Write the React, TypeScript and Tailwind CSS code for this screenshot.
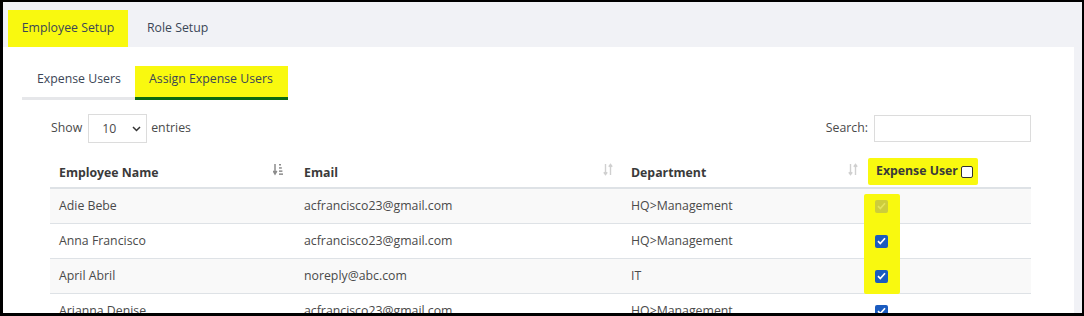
import React from 'react'

const rows = [
    { name: 'Adie Bebe', email: 'acfrancisco23@gmail.com', dept: 'HQ>Management', state: 'disabled' },
    { name: 'Anna Francisco', email: 'acfrancisco23@gmail.com', dept: 'HQ>Management', state: 'on' },
    { name: 'April Abril', email: 'noreply@abc.com', dept: 'IT', state: 'on' },
    { name: 'Arianna Denise', email: 'acfrancisco23@gmail.com', dept: 'HQ>Management', state: 'on' }
]

function SortActive() {
    return (
        <svg width="10" height="13" viewBox="0 0 10 13" className="text-[#8c8c8c]">
            <path d="M2 1v10M0.2 8l1.8 3 1.8-3" stroke="currentColor" strokeWidth="1.5" fill="none" />
            <rect x="6" y="1" width="2" height="1.5" fill="currentColor" />
            <rect x="6" y="4.2" width="2.8" height="1.5" fill="currentColor" />
            <rect x="6" y="7.4" width="3.4" height="1.5" fill="currentColor" />
            <rect x="6" y="10.4" width="4" height="1.5" fill="currentColor" />
        </svg>
    )
}

function SortBoth() {
    return (
        <svg width="10" height="13" viewBox="0 0 10 13" className="text-[#d0d0d0]">
            <path d="M2.5 1v10.5M0.8 9.3l1.7 2.2 1.7-2.2" stroke="currentColor" strokeWidth="1.4" fill="none" />
            <path d="M7.5 12V1.5M5.8 3.7l1.7-2.2 1.7 2.2" stroke="currentColor" strokeWidth="1.4" fill="none" />
        </svg>
    )
}

function Check({ state }: { state: string }) {
    const disabled = state === 'disabled'
    return (
        <div
            className={
                'relative z-10 flex h-[13px] w-[13px] items-center justify-center rounded-[2px] ' +
                (disabled ? 'bg-[#cdcd3c]' : 'bg-[#1a5bbf]')
            }
        >
            <svg width="9" height="8" viewBox="0 0 9 8">
                <path
                    d="M1 4.2l2.3 2.3L8 1.3"
                    stroke={disabled ? '#e4e45a' : '#ffffff'}
                    strokeWidth="1.7"
                    fill="none"
                />
            </svg>
        </div>
    )
}

export default function App() {
    return (
        <div
            className="h-[316px] w-[1084px] overflow-hidden border-t-2 border-r-2 border-b-[3px] border-l-[3px] border-black bg-[#f1f2f6] text-[12.3px]"
            style={{ fontFamily: '"Open Sans", "Noto Sans", sans-serif' }}
        >
            <div className="flex pt-[8px] pl-[5px] text-[#3b4656]">
                <div className="flex h-[37px] w-[120px] items-center justify-center bg-[#f9f90f]">
                    Employee Setup
                </div>
                <div className="flex h-[37px] items-center px-[19px]">Role Setup</div>
            </div>

            <div className="mr-[8px] h-[300px] bg-white pt-[19px]">
                <div className="flex pl-[19px] text-[#3b4656]">
                    <div className="h-[34px] w-[113px] border-b-[3px] border-[#e6e7ea] pt-[4px] pl-[15px]">
                        Expense Users
                    </div>
                    <div className="h-[34px] w-[153px] border-b-[3px] border-[#0c6a10] bg-[#f9f90f] pt-[4px] pl-[14px]">
                        Assign Expense Users
                    </div>
                </div>

                <div className="mr-[43px] ml-[47px]">
                    <div className="mt-[14px] flex items-center justify-between text-[#4a4a4a]">
                        <div className="flex items-center">
                            <span className="pl-[1px]">Show</span>
                            <div className="ml-[6px] flex h-[29px] w-[59px] items-center justify-between border border-[#dcdcdc] pr-[5px] pl-[13px]">
                                <span className="pt-[2px]">10</span>
                                <svg width="9" height="6" viewBox="0 0 9 6">
                                    <path d="M1 1l3.5 3.5L8 1" stroke="#333" strokeWidth="1.5" fill="none" />
                                </svg>
                            </div>
                            <span className="ml-[4px]">entries</span>
                        </div>
                        <div className="flex items-center">
                            <span>Search:</span>
                            <div className="ml-[6px] h-[27px] w-[157px] border border-[#dcdcdc]" />
                        </div>
                    </div>

                    <div className="relative mt-[8px]">
                        <div className="grid h-[38px] grid-cols-[245px_327px_244px_165px] border-b-2 border-[#dee2e6] font-bold text-[#3a3a3a]">
                            <div className="flex items-end justify-between pr-[12px] pb-[5px] pl-[9px]">
                                <span>Employee Name</span>
                                <span className="pb-[6px]"><SortActive /></span>
                            </div>
                            <div className="flex items-end justify-between pr-[9px] pb-[5px] pl-[9px]">
                                <span>Email</span>
                                <span className="pb-[6px]"><SortBoth /></span>
                            </div>
                            <div className="flex items-end justify-between pr-[8px] pb-[5px] pl-[9px]">
                                <span>Department</span>
                                <span className="pb-[6px]"><SortBoth /></span>
                            </div>
                            <div className="flex items-end pb-[2px] pl-[2px]">
                                <div className="flex h-[27px] items-center gap-[3px] rounded-[2px] bg-[#f9f90f] pr-[5px] pl-[8px] text-[#3a3a3a]">
                                    <span>Expense User</span>
                                    <div className="h-[12px] w-[12px] rounded-[2px] border border-[#333] bg-white" />
                                </div>
                            </div>
                        </div>

                        {rows.map((r, i) => (
                            <div
                                key={r.name}
                                className={
                                    'grid h-[35px] grid-cols-[245px_327px_244px_165px] items-center border-b border-[#dee2e6] text-[#4a4a4a] ' +
                                    (i % 2 === 0 ? 'bg-[#f9f9f9]' : 'bg-white')
                                }
                            >
                                <div className="pl-[9px]">{r.name}</div>
                                <div className="pl-[9px]">{r.email}</div>
                                <div className="pl-[9px]">{r.dept}</div>
                                <div className="pl-[9px]">
                                    <Check state={r.state} />
                                </div>
                            </div>
                        ))}

                        <div className="absolute top-[43px] left-[814px] h-[100px] w-[36px] rounded-[2px] bg-[#f9f90f]" />
                    </div>
                </div>
            </div>
        </div>
    )
}
